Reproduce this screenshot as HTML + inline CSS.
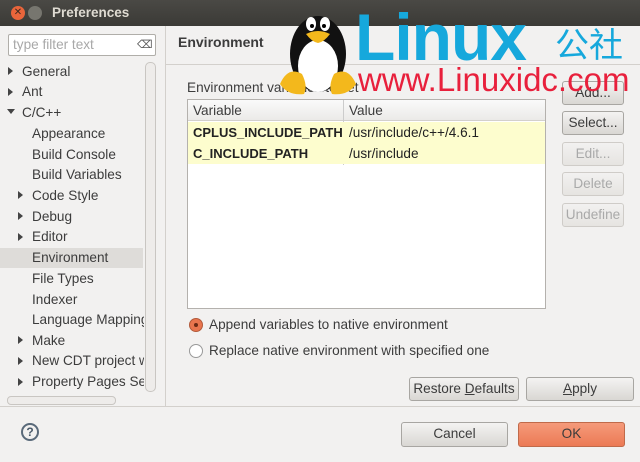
<!DOCTYPE html><html><head><style>
*{margin:0;padding:0;box-sizing:border-box}
body{width:640px;height:462px;background:#f2f1f0;font-family:"Liberation Sans","Noto Sans CJK SC",sans-serif;font-size:13.6px;color:#3c3c3c;position:relative;overflow:hidden}
.a{position:absolute;white-space:nowrap}
.btn{position:absolute;border:1px solid #a8a6a2;border-radius:3px;background:linear-gradient(#f4f3f2,#d9d7d3);text-align:center;line-height:22px;color:#3c3c3c}
.dis{color:#a9a9a9;background:linear-gradient(#f2f1f0,#e6e4e1);border-color:#cfccc8}
.tri{position:absolute;width:0;height:0;border-top:4px solid transparent;border-bottom:4px solid transparent;border-left:5px solid #444}
</style></head><body>
<div class="a" style="left:0;top:0;width:640px;height:26px;background:linear-gradient(#4a4945,#3b3a36)"></div>
<div class="a" style="left:11px;top:6px;width:14px;height:14px;border-radius:7px;background:#e9653b;color:#3a2a20;font-size:10px;text-align:center;line-height:14px">✕</div>
<div class="a" style="left:28px;top:6px;width:14px;height:14px;border-radius:7px;background:#77766f"></div>
<div class="a" style="left:52px;top:5px;color:#dfdbd2;font-weight:bold;font-size:13.5px">Preferences</div>
<!-- left -->
<div class="a" style="left:8px;top:34px;width:148px;height:22px;border:1px solid #b0aea9;background:#fff;border-radius:2px"></div>
<div class="a" style="left:13px;top:37px;color:#a8a8a8">type filter text</div>
<div class="a" style="left:137px;top:38px;font-size:11px;color:#555">⌫</div>
<div class="a" style="left:145px;top:62px;width:11px;height:330px;border:1px solid #c9c6c2;border-radius:5px;background:#eeecea"></div>
<div class="a" style="left:0;top:248px;width:143px;height:20px;background:#dedcd9"></div>
<div class="tri" style="left:8px;top:67px"></div><div class="a" style="left:22px;top:64px">General</div>
<div class="tri" style="left:8px;top:88px"></div><div class="a" style="left:22px;top:84px">Ant</div>
<div class="a" style="left:7px;top:109px;border-left:4px solid transparent;border-right:4px solid transparent;border-top:5px solid #444;width:0"></div><div class="a" style="left:22px;top:105px">C/C++</div>
<div class="a" style="left:32px;top:126px">Appearance</div>
<div class="a" style="left:32px;top:147px">Build Console</div>
<div class="a" style="left:32px;top:167px">Build Variables</div>
<div class="tri" style="left:18px;top:191px"></div><div class="a" style="left:32px;top:188px">Code Style</div>
<div class="tri" style="left:18px;top:212px"></div><div class="a" style="left:32px;top:209px">Debug</div>
<div class="tri" style="left:18px;top:233px"></div><div class="a" style="left:32px;top:229px">Editor</div>
<div class="a" style="left:32px;top:250px">Environment</div>
<div class="a" style="left:32px;top:271px">File Types</div>
<div class="a" style="left:32px;top:292px">Indexer</div>
<div class="a" style="left:32px;top:312px;width:112px;overflow:hidden">Language Mapping</div>
<div class="tri" style="left:18px;top:336px"></div><div class="a" style="left:32px;top:333px">Make</div>
<div class="tri" style="left:18px;top:357px"></div><div class="a" style="left:32px;top:353px;width:112px;overflow:hidden">New CDT project w</div>
<div class="tri" style="left:18px;top:378px"></div><div class="a" style="left:32px;top:374px;width:112px;overflow:hidden">Property Pages Se</div>
<div class="a" style="left:7px;top:396px;width:109px;height:9px;border:1px solid #c9c6c2;border-radius:4px;background:#eeecea"></div>
<div class="a" style="left:165px;top:26px;width:1px;height:380px;background:#d3d0cc"></div>
<!-- right -->
<div class="a" style="left:166px;top:26px;width:474px;height:39px;background:#f2f1f0;border-bottom:1px solid #d3d0cc"></div>
<div class="a" style="left:178px;top:34px;font-weight:bold;font-size:14px">Environment</div>
<div class="a" style="left:187px;top:80px">Environment variables to set</div>
<div class="a" style="left:187px;top:99px;width:359px;height:210px;border:1px solid #b4b1ad;background:#fff"></div>
<div class="a" style="left:188px;top:100px;width:357px;height:21px;background:linear-gradient(#fafafa,#ebeae8);border-bottom:1px solid #d3d0cc"></div>
<div class="a" style="left:343px;top:100px;width:1px;height:65px;background:#ccc"></div>
<div class="a" style="left:193px;top:103px">Variable</div><div class="a" style="left:349px;top:103px">Value</div>
<div class="a" style="left:188px;top:122px;width:357px;height:42px;background:#fdfdce"></div>
<div class="a" style="left:193px;top:125px;font-weight:bold;color:#222;font-size:13px">CPLUS_INCLUDE_PATH</div><div class="a" style="left:349px;top:125px;color:#222">/usr/include/c++/4.6.1</div>
<div class="a" style="left:193px;top:146px;font-weight:bold;color:#222;font-size:13px">C_INCLUDE_PATH</div><div class="a" style="left:349px;top:146px;color:#222">/usr/include</div>
<div class="btn" style="left:562px;top:81px;width:62px">Add...</div>
<div class="btn" style="left:562px;top:111px;width:62px">Select...</div>
<div class="btn dis" style="left:562px;top:142px;width:62px">Edit...</div>
<div class="btn dis" style="left:562px;top:172px;width:62px">Delete</div>
<div class="btn dis" style="left:562px;top:203px;width:62px">Undefine</div>
<div class="a" style="left:189px;top:318px;width:14px;height:14px;border-radius:7px;background:#e9754e;border:1px solid #b25a3a"><div style="margin:4px;width:4px;height:4px;border-radius:2px;background:#6a2a15"></div></div>
<div class="a" style="left:209px;top:317px">Append variables to native environment</div>
<div class="a" style="left:189px;top:344px;width:14px;height:14px;border-radius:7px;background:#fff;border:1px solid #999"></div>
<div class="a" style="left:209px;top:343px">Replace native environment with specified one</div>
<div class="btn" style="left:409px;top:377px;width:110px;height:24px">Restore <u>D</u>efaults</div>
<div class="btn" style="left:526px;top:377px;width:108px;height:24px"><u>A</u>pply</div>
<div class="a" style="left:0;top:406px;width:640px;height:1px;background:#d3d0cc"></div>
<div class="a" style="left:21px;top:423px;width:18px;height:18px;border-radius:9px;border:2px solid #5a6a7a;text-align:center;font-weight:bold;font-size:12px;line-height:14px;color:#4a5a6a">?</div>
<div class="btn" style="left:401px;top:422px;width:107px;height:25px">Cancel</div>
<div class="btn" style="left:518px;top:422px;width:107px;height:25px;background:linear-gradient(#f59a7a,#ec7a55);border-color:#c06a4a">OK</div>
<!-- watermark -->
<svg class="a" style="left:278px;top:4px" width="80" height="92" viewBox="0 0 80 92">
<ellipse cx="40" cy="50" rx="28" ry="38" fill="#111"/>
<ellipse cx="40" cy="62" rx="20" ry="26" fill="#fff"/>
<ellipse cx="33" cy="20" rx="5" ry="7" fill="#fff"/><ellipse cx="47" cy="20" rx="5" ry="7" fill="#fff"/>
<circle cx="34" cy="22" r="2" fill="#000"/><circle cx="46" cy="22" r="2" fill="#000"/>
<path d="M28 30 Q40 24 52 30 Q46 38 40 39 Q34 38 28 30Z" fill="#f3b81c"/>
<path d="M2 80 Q10 62 24 70 Q30 82 26 90 Q10 92 2 80Z" fill="#f3b81c"/>
<path d="M78 80 Q70 62 56 70 Q50 82 54 90 Q70 92 78 80Z" fill="#f3b81c"/>
</svg>
<div class="a" style="left:355px;top:0px;font-size:66px;font-weight:bold;color:#16a8dc;letter-spacing:-1px;line-height:74px">Linux</div>
<div class="a" style="left:555px;top:26px;font-size:34px;color:#16a8dc;line-height:40px">公社</div>
<div class="a" style="left:358px;top:62px;font-size:33px;color:#e8203c;line-height:36px">www.Linuxidc.com</div>
</body></html>
